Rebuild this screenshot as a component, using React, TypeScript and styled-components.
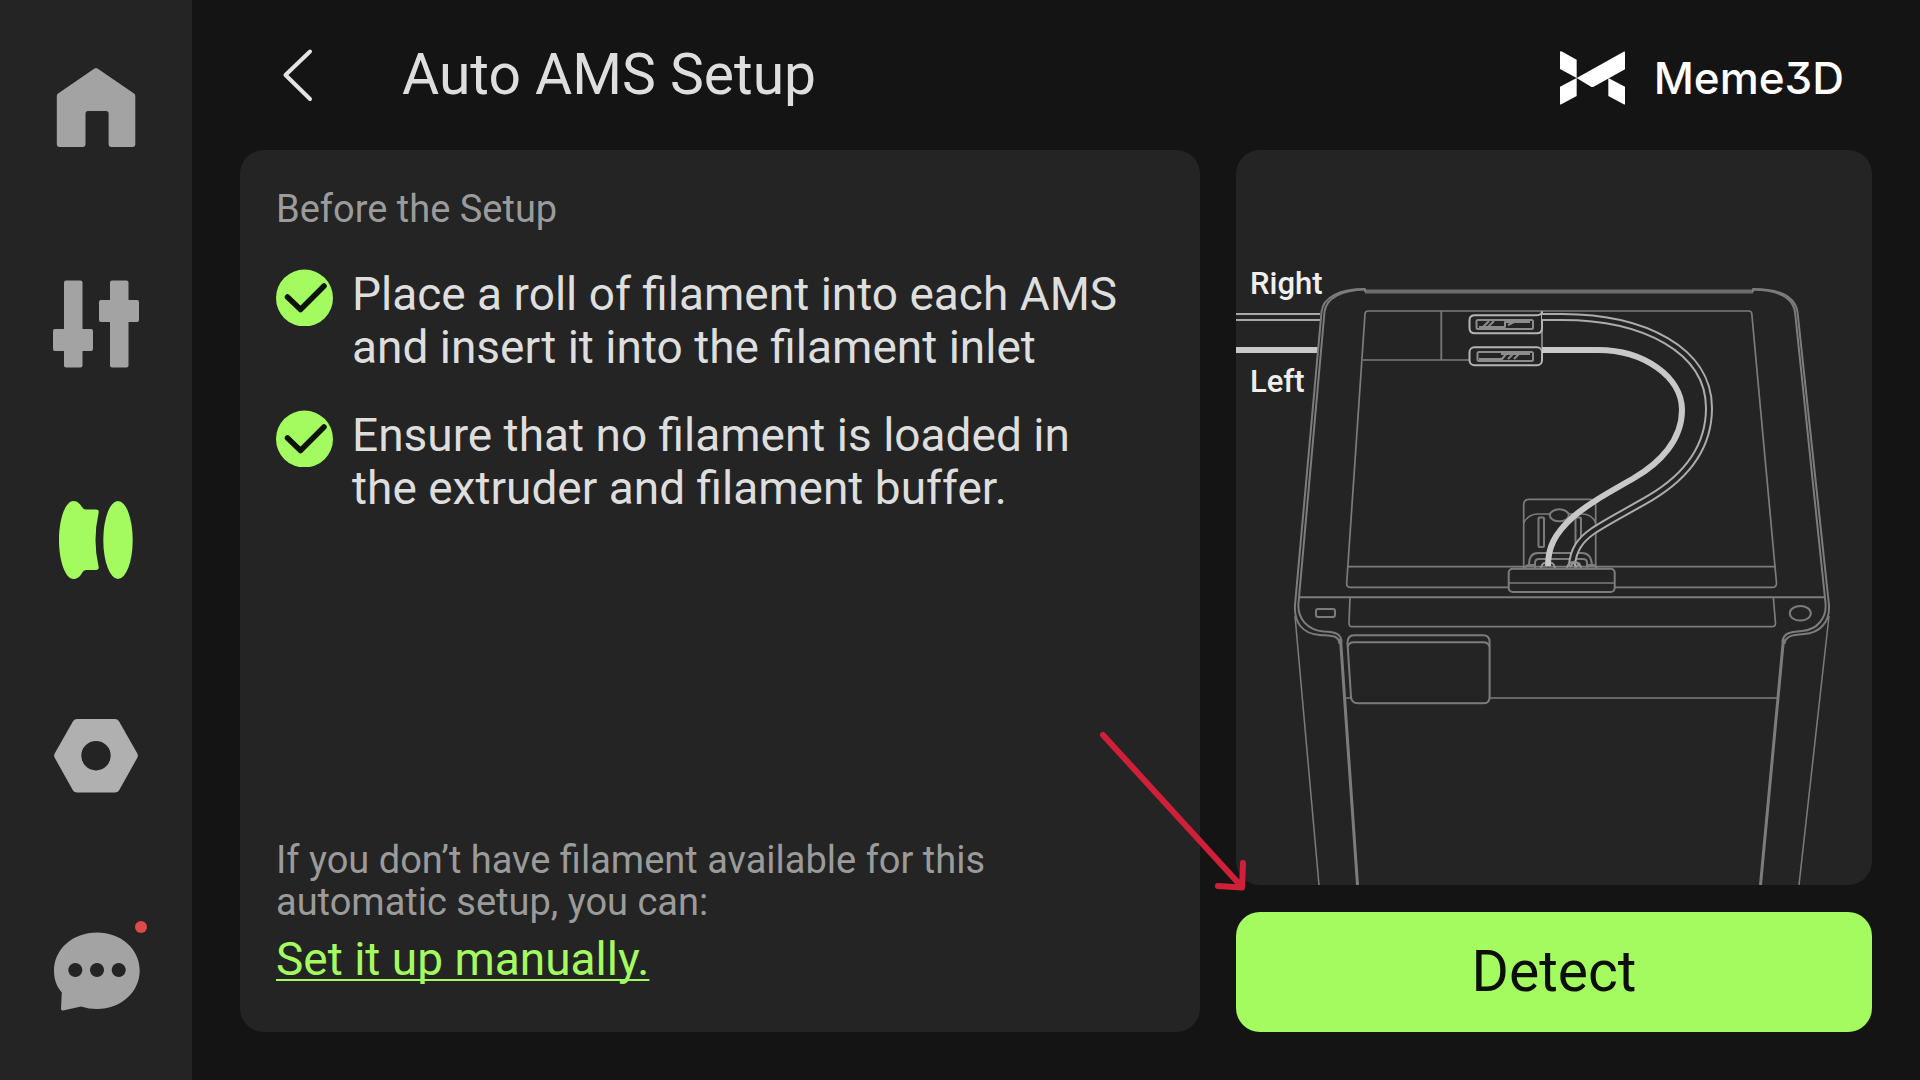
import React from "react";
import styled, { createGlobalStyle } from "styled-components";

const color = {
  page: "#141414",
  panel: "#242424",
  green: "#a4fb60",
  icon: "#a3a3a3",
  text: "#dedede",
  muted: "#9b9b9b",
  line: "#7c7c7c",
  alert: "#e0484a",
  arrow: "#d01f38",
};

const GlobalStyle = createGlobalStyle`
  *, *::before, *::after { box-sizing: border-box; }
  body {
    margin: 0;
    background: ${color.page};
    color: ${color.text};
    font-family: Roboto, "Liberation Sans", sans-serif;
  }
  h1, h2, p, ul { margin: 0; padding: 0; font-weight: 400; }
  button { border: 0; padding: 0; background: none; color: inherit; font: inherit; cursor: pointer; }
`;

const Screen = styled.div`
  display: flex;
  min-height: 100vh;
`;

const Sidebar = styled.nav`
  flex: 0 0 192px;
  display: flex;
  flex-direction: column;
  background: ${color.panel};
`;

const NavButton = styled.button<{ $active?: boolean }>`
  flex: 1;
  display: flex;
  align-items: center;
  justify-content: center;
  color: ${(p) => (p.$active ? color.green : color.icon)};
`;

const NavIcon = styled.svg`
  width: 96px;
  height: 96px;
  overflow: visible;
  fill: currentColor;
`;

const Page = styled.div`
  flex: 1;
  min-width: 0;
  display: flex;
  flex-direction: column;
  padding: 0 48px 48px;
`;

const Header = styled.header`
  height: 150px;
  display: flex;
  align-items: center;
  padding: 0 28px 0 26px;
`;

const BackButton = styled.button`
  display: flex;
  align-items: center;
  justify-content: center;
  width: 64px;
  height: 80px;
  margin-right: 72px;
`;

const Title = styled.h1`
  font-size: 57px;
  line-height: 64px;
`;

const Brand = styled.div`
  display: flex;
  align-items: center;
  gap: 29px;
  margin-left: auto;
  padding-top: 6px;
  color: #fff;
  font-family: Inter, Roboto, sans-serif;
  font-size: 44px;
  font-weight: 500;
  line-height: 54px;
  font-feature-settings: "cv09";
`;

const Content = styled.main`
  flex: 1;
  display: grid;
  grid-template-columns: 960fr 636fr;
  gap: 36px;
`;

const Instructions = styled.section`
  display: flex;
  flex-direction: column;
  padding: 36px 36px 46px;
  border-radius: 24px;
  background: ${color.panel};
`;

const SectionTitle = styled.h2`
  color: ${color.muted};
  font-size: 38px;
  line-height: 46px;
`;

const Steps = styled.ul`
  display: flex;
  flex-direction: column;
  gap: 35px;
  margin-top: 36px;
  list-style: none;
`;

const Step = styled.li`
  display: flex;
  align-items: flex-start;
  gap: 18px;
  font-size: 46px;
  line-height: 53px;
`;

const CheckIcon = styled.svg`
  flex: none;
  width: 58px;
  height: 58px;
`;

const Fallback = styled.div`
  display: flex;
  flex-direction: column;
  align-items: flex-start;
  gap: 10px;
  margin-top: auto;
`;

const Hint = styled.p`
  color: ${color.muted};
  font-size: 38px;
  line-height: 42px;
`;

const ManualLink = styled.a`
  color: ${color.green};
  font-size: 46px;
  line-height: 53px;
  text-decoration: underline;
  text-decoration-thickness: 2px;
  text-underline-offset: 4px;
  text-decoration-skip-ink: none;
`;

const Side = styled.section`
  position: relative;
  display: flex;
  flex-direction: column;
  gap: 27px;
`;

const Illustration = styled.div`
  flex: 1;
  display: flex;
  border-radius: 24px;
  overflow: hidden;
  background: ${color.panel};
`;

const Drawing = styled.svg`
  width: 100%;
  height: 100%;
  fill: none;
  stroke: ${color.line};
  stroke-width: 2;
  stroke-linejoin: round;
`;

const TubeLabel = styled.text`
  fill: #efefef;
  stroke: none;
  font-size: 31px;
  font-weight: 500;
`;

const DetectButton = styled.button`
  height: 120px;
  border-radius: 24px;
  background: ${color.green};
  color: #0b0f08;
  font-size: 57px;
  line-height: 64px;
`;

const Pointer = styled.svg`
  position: absolute;
  left: -140px;
  bottom: 136px;
  width: 156px;
  height: 168px;
  pointer-events: none;
`;

const HomeIcon = () => (
  <NavIcon viewBox="0 0 96 96">
    <path d="M46.500 8.600q1.500-1 3 0L86 33.400q1.300.9 1.300 2.500V84.600q0 2.400-2.400 2.400H63q-2.400 0-2.400-2.400V53.500q0-2.500-2.500-2.500H40q-2.500 0-2.500 2.500V84.600q0 2.400-2.400 2.400H11.200q-2.400 0-2.400-2.400V35.900q0-1.600 1.300-2.500Z" />
  </NavIcon>
);

const SlidersIcon = () => (
  <NavIcon viewBox="0 0 96 96">
    <rect x="16" y="4.500" width="18.500" height="87" rx="2" />
    <rect x="5" y="53" width="40" height="22" rx="2" />
    <rect x="62" y="4.500" width="18.500" height="87" rx="2" />
    <rect x="51" y="24" width="40" height="22" rx="2" />
  </NavIcon>
);

const SpoolIcon = () => (
  <NavIcon viewBox="0 0 96 96">
    <path d="M25.500 9C29.500 9 32 12 34 15Q35.500 17.500 38 17.500H48Q51.500 17.500 50.500 21.500Q44.500 48 50.500 74Q51.500 78 48 78H38Q35.500 78 34 81C32 84.500 29.500 87 25.500 87C17.500 87 11 69.500 11 48S17.500 9 25.500 9Z" />
    <ellipse cx="70" cy="48" rx="14.700" ry="39" />
  </NavIcon>
);

const NutIcon = () => (
  <NavIcon viewBox="0 0 96 96">
    <path
      fill="#b0b0b0"
      fillRule="evenodd"
      d="M29 11H67Q69.500 11 71 13.200L89.300 45.600Q90.400 47.700 89.300 49.800L71 82.500Q69.500 84.600 67 84.600H29Q26.500 84.600 25 82.500L6.700 49.800Q5.600 47.700 6.700 45.600L25 13.200Q26.500 11 29 11ZM48 33A14.700 14.700 0 1 0 48 62.400A14.700 14.700 0 1 0 48 33Z"
    />
  </NavIcon>
);

const ChatIcon = () => (
  <NavIcon viewBox="0 0 96 96">
    <path
      fillRule="evenodd"
      d="M49 8.500C73 8.500 91.700 25 91.700 46.500S73 85 49 85Q41 85 33 82.500L15 86.500Q13 86.800 13 84.800L13.800 68.500C9 63 6 56 6 46.500C6 25 25 8.500 49 8.500ZM27.300 39a7 7 0 1 0 .01 0ZM49 39a7 7 0 1 0 .01 0ZM70.700 39a7 7 0 1 0 .01 0Z"
    />
    <circle cx="93" cy="3" r="6" fill={color.alert} />
  </NavIcon>
);

const Check = () => (
  <CheckIcon viewBox="0 0 58 58" aria-hidden="true">
    <circle cx="28.500" cy="30" r="28.500" fill={color.green} />
    <path d="M11.500 29L24.500 41.500L48 18" fill="none" stroke="#0c1306" strokeWidth="5.500" strokeLinecap="round" strokeLinejoin="round" />
  </CheckIcon>
);

const BrandMark = () => (
  <svg width="65" height="54" viewBox="175 91 195 162" fill="#fff" aria-hidden="true">
    <path d="M175 93Q176 91 179 92L225 117V172L175 145Z" />
    <path d="M225 172L366 93Q370 91 370 95V146L276 198Q272 200 268 198Z" />
    <path d="M225 172V226L179 251Q175 253 175 249V198Z" />
    <path d="M320 172L370 198V249Q370 253 366 251L320 226Z" />
  </svg>
);

const rightTube =
  "M306 167H326C408 167 473 200 473 258C473 300 446 329 414 348C390 362 372 371 357 381C344 390 337 400 336 416";

const PrinterDrawing = () => (
  <Drawing viewBox="0 0 636 735" preserveAspectRatio="xMinYMax slice" role="img" aria-label="Printer seen from behind with the right and left filament tubes">
    {/* incoming tubes */}
    <g stroke="#a8a8a8">
      <path d="M0 164H84M0 170H84" />
      <path d="M0 200H82" strokeWidth="6" stroke="#c8c8c8" />
    </g>

    {/* outer frame */}
    <path d="M129 141.500H517" strokeWidth="4" stroke="#6c6c6c" />
    <path d="M129 142V139C104 139 87 147 85.500 162L59 455C58 472 66 484 84 485C96 486 103 485 103.500 494" />
    <path d="M129 139.500C106 140 90 148 88.500 162L62.500 453C61 468 71 480 88 481.500C100 482 105 484 105.500 492" />
    <path d="M517 142V139C545 139 559 147 561.500 162L593 455C594 472 584 483 568 484C556 485 549 486 548.500 494" />
    <path d="M517 139.500C543 140 557 148 559 162L589.500 453C591 468 581 480 566 481C554 482 547 483 546.500 492" />

    {/* legs */}
    <path d="M59 466L83 735M593 466L563 735" strokeWidth="1.500" />
    <path d="M104.500 489L121.500 735M547.500 489L524.500 735" strokeWidth="3" />

    {/* glass lid */}
    <path d="M132 161H513Q515.500 161 515.800 164L540.500 433Q540.500 437.300 537 437.300H114Q110.500 437.300 110.700 433L129 164Q129.300 161 132 161Z" strokeWidth="1.700" />
    <path d="M112 416.700H539.500M205.300 161V210M127 210H234" strokeWidth="1.700" />

    {/* lower edge and back panel */}
    <path d="M63 447.300H589" />
    <path d="M114 447.300L113 473Q113 476.700 116 476.700H536Q539.500 476.700 539.500 473L537.300 447.300" strokeWidth="1.700" />
    <rect x="80" y="459" width="19" height="8" rx="2" />
    <ellipse cx="564.300" cy="463.300" rx="10.500" ry="7.300" />
    <path d="M110 548H115.500M254 548H542" strokeWidth="1.700" />
    <path d="M118 485.300H247Q253.600 485.300 253.600 492V547Q253.600 553.300 248 553.300H122Q115.500 553.300 115 547L111.500 493Q111.500 485.300 118 485.300Z" />
    <path d="M111.800 497Q112.500 492.300 118 492.300H247Q252.500 492.300 253.600 497" />

    {/* tube couplings */}
    <g stroke="#b4b4b4">
      <path d="M306 162V198" stroke={color.line} />
      <path d="M306 162V178Q306 183.300 301 183.300H239Q233.500 183.300 233.500 178V170Q233.500 165.300 239 165.300H300Q305 165.300 306 162Z" />
      <rect x="233.500" y="197.300" width="72.500" height="18" rx="5" />
      <g stroke="#8c8c8c">
        <rect x="240.500" y="170" width="56.500" height="9" rx="1.500" />
        <path d="M243 177H269V172H294M247 177L253 171M252 177L258 171M272 175L278 172" />
        <rect x="241.500" y="202" width="55.500" height="9" rx="1.500" />
        <path d="M243 209H266L271 203M272 209L278 203M278 209L284 203M265 204H294" />
      </g>
    </g>

    {/* tool head */}
    <path d="M287.700 418V355Q287.700 349.300 293 349.300H354Q359.700 349.300 359.700 355V418" strokeWidth="1.700" />
    <path d="M287.700 373Q292 364 302 364H314M333 364H346Q356 364 359.700 373" strokeWidth="1.700" />
    <ellipse cx="323.300" cy="365.300" rx="9.500" ry="6" />
    <rect x="302.500" y="367.500" width="5.500" height="29.500" rx="1" />
    <rect x="339.500" y="367.500" width="5.500" height="29.500" rx="1" />
    <path d="M293 415Q293 403 302 403H346Q355 403 356 415M299 418V413Q299 409 303 409H347Q351 409 351 413V418M289 418Q290 415 293 415H299M351 415H357Q360 415 361 418" />

    {/* tubes to the tool head */}
    <path d={rightTube} strokeWidth="8" stroke="#acacac" />
    <path d={rightTube} strokeWidth="4" stroke={color.panel} />
    <path
      d="M306 200H362C408 200 446 227 446 260C446 290 424 313 398 328C370 344 352 354 337 367C318 384 312 398 312 416"
      strokeWidth="6"
      stroke="#c8c8c8"
    />
    <path d="M305 418Q306 413 309 413M315 413Q318 413 319 418M331 418Q332 412 338 412T345 418M334 417L339 411M339 418L344 413" stroke="#949494" />

    <rect x="272.700" y="418.700" width="106" height="23.300" rx="4" fill={color.panel} />
    <path d="M273 433H378.500" strokeWidth="1.700" />

    <TubeLabel x="14" y="144">Right</TubeLabel>
    <TubeLabel x="14" y="242">Left</TubeLabel>
  </Drawing>
);

const navItems = [
  { label: "Home", Icon: HomeIcon },
  { label: "Controls", Icon: SlidersIcon },
  { label: "Filament", Icon: SpoolIcon },
  { label: "Settings", Icon: NutIcon },
  { label: "Messages", Icon: ChatIcon },
];

const steps = [
  ["Place a roll of filament into each AMS", "and insert it into the filament inlet"],
  ["Ensure that no filament is loaded in", "the extruder and filament buffer."],
];

export default function App() {
  return (
    <>
      <GlobalStyle />
      <Screen>
        <Sidebar aria-label="Main">
          {navItems.map(({ label, Icon }) => (
            <NavButton key={label} type="button" aria-label={label} $active={label === "Filament"}>
              <Icon />
            </NavButton>
          ))}
        </Sidebar>
        <Page>
          <Header>
            <BackButton type="button" aria-label="Back">
              <svg width="32" height="56" viewBox="0 0 32 56" fill="none" stroke="#e4e4e4" strokeWidth="4" strokeLinecap="round" strokeLinejoin="round">
                <path d="M28 4.500L3.500 28L28 52" />
              </svg>
            </BackButton>
            <Title>Auto AMS Setup</Title>
            <Brand>
              <BrandMark />
              Meme3D
            </Brand>
          </Header>
          <Content>
            <Instructions>
              <SectionTitle>Before the Setup</SectionTitle>
              <Steps>
                {steps.map(([first, second]) => (
                  <Step key={first}>
                    <Check />
                    <span>
                      {first}
                      <br />
                      {second}
                    </span>
                  </Step>
                ))}
              </Steps>
              <Fallback>
                <Hint>
                  If you don’t have filament available for this
                  <br />
                  automatic setup, you can:
                </Hint>
                <ManualLink href="#manual">Set it up manually.</ManualLink>
              </Fallback>
            </Instructions>
            <Side>
              <Illustration>
                <PrinterDrawing />
              </Illustration>
              <DetectButton type="button">Detect</DetectButton>
              <Pointer viewBox="0 0 156 168" fill="none" stroke={color.arrow} strokeWidth="6" strokeLinecap="round" strokeLinejoin="round" aria-hidden="true">
                <path d="M7 7L146 159M147 135L146 159.500L122 158" />
              </Pointer>
            </Side>
          </Content>
        </Page>
      </Screen>
    </>
  );
}
